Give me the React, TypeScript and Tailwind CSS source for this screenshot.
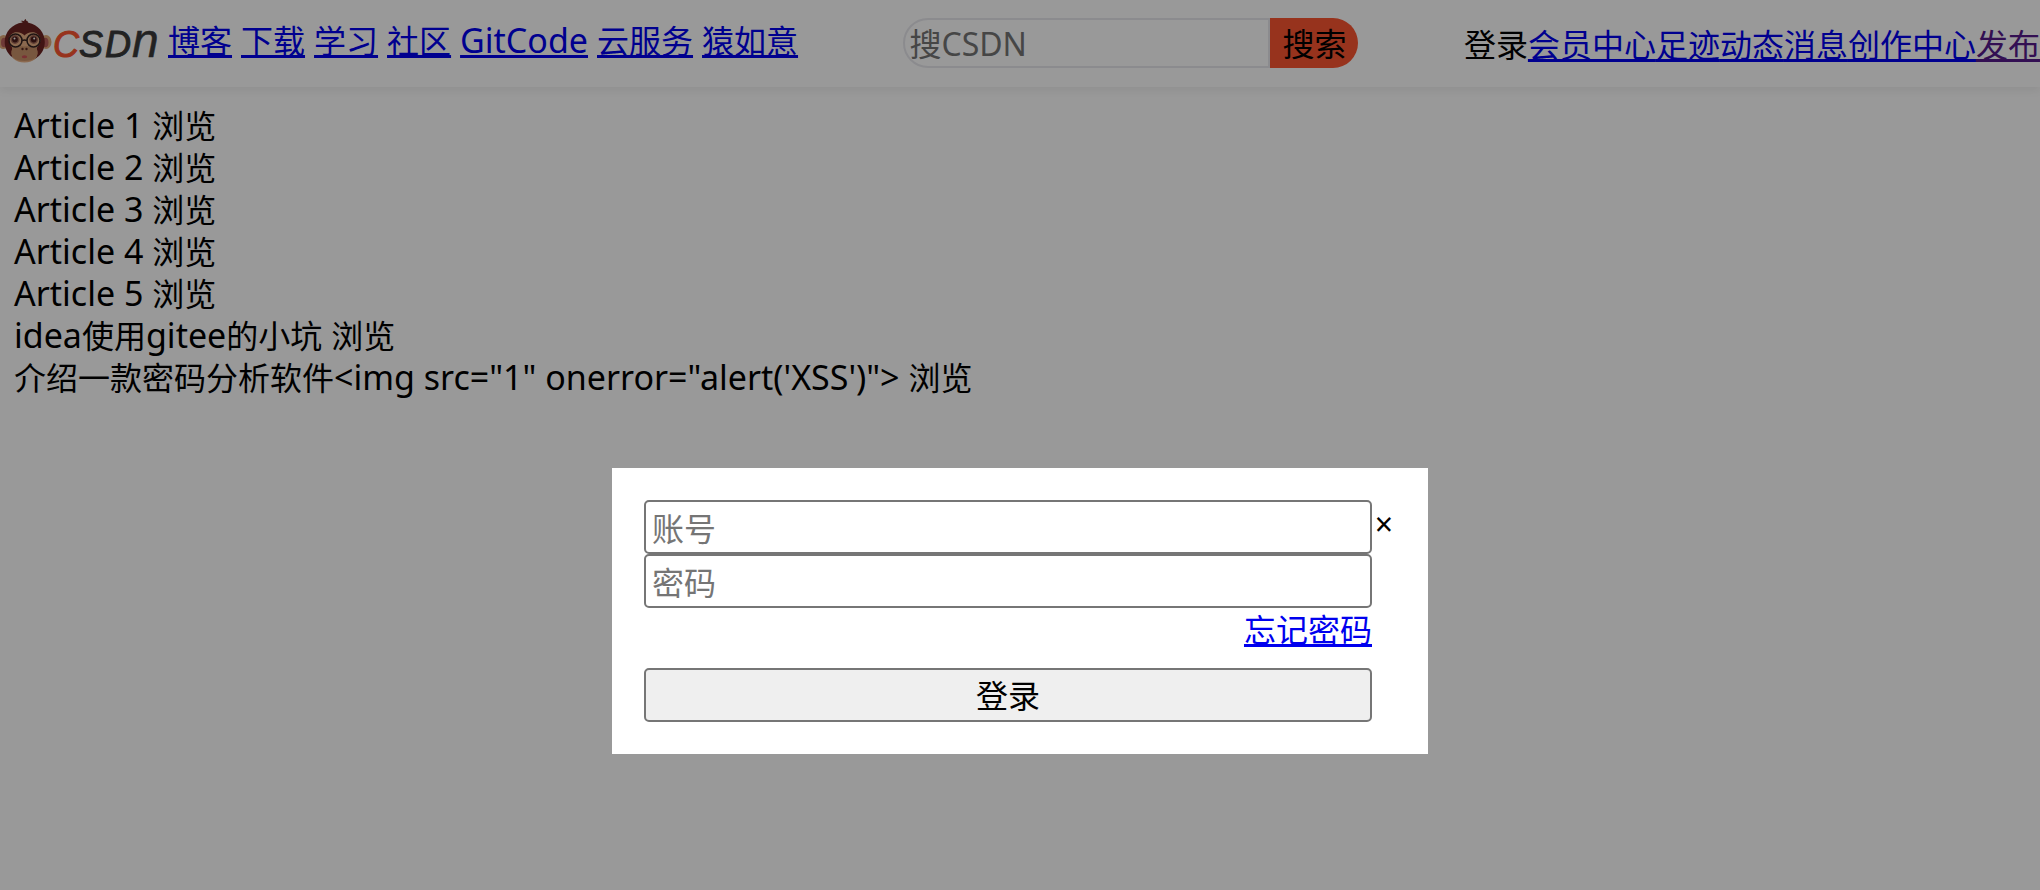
const NAV = ["博客", "下载", "学习", "社区", "GitCode", "云服务", "猿如意"];
const USER_LINKS = ["会员中心", "足迹", "动态", "消息", "创作中心"];
const ARTICLES = [
  "Article 1",
  "Article 2",
  "Article 3",
  "Article 4",
  "Article 5",
  "idea使用gitee的小坑",
  `介绍一款密码分析软件<img src="1" onerror="alert('XSS')">`,
];

/* Latin runs are set slightly larger than the Chinese characters around them. */
function Mixed({ text }: { text: string }) {
  return (
    <>
      {text.split(/([\x20-\x7e]+)/).map((run, i) =>
        i % 2 ? (
          <span key={i} className="text-[34px] leading-none">{run}</span>
        ) : (
          run
        ),
      )}
    </>
  );
}

function Logo() {
  return (
    <svg className="h-[88px] w-[160px] shrink-0" viewBox="0 0 160 88" role="img" aria-label="CSDN">
      <ellipse cx="3.500" cy="42" rx="5.500" ry="7" fill="#e0a878" />
      <ellipse cx="46" cy="42" rx="5.500" ry="7" fill="#e0a878" />
      <ellipse cx="4" cy="42.500" rx="3" ry="4.800" fill="#b8605c" />
      <ellipse cx="45.500" cy="42.500" rx="3" ry="4.800" fill="#b8605c" />
      <path
        d="M22.500 22.500C22.500 21.500 21.500 21.300 20.500 21.300C22 20.500 23.500 20.800 24.300 21.300C24 20.300 24.500 19.500 26 19C25.800 20.500 26.500 21.300 28 20.700C27.300 21.500 27.500 22 28.500 22.700C38 24.500 44.800 32.500 44.800 42C44.800 53 36 61.500 25 61.500C14 61.500 4.700 53 4.700 42C4.700 32 12 24 22.500 22.500Z"
        fill="#6d2422"
      />
      <path
        d="M24.500 35.500C21.500 31.500 11 30 9 38.500C8.400 43 10.500 45.500 12.500 48C9 57 15 62.500 24.500 62.500C34 62.500 40 57 36.500 48C39 45.500 40.800 43 40.200 38.500C38 30 27.500 31.500 24.500 35.500Z"
        fill="#e8b084"
      />
      <path
        d="M12.500 48C17 45.500 21 46.500 24.500 46.500C28 46.500 32 45.500 36.500 48C40 57 34 61 24.500 61C15 61 9 57 12.500 48Z"
        fill="#c99269"
      />
      <circle cx="15" cy="39.500" r="4.400" fill="#a06858" />
      <circle cx="33.700" cy="39.500" r="4.400" fill="#a06858" />
      <circle cx="15" cy="39.500" r="2.900" fill="#4a1c1a" />
      <circle cx="33.700" cy="39.500" r="2.900" fill="#4a1c1a" />
      <circle cx="14.500" cy="38.500" r="1" fill="#fff" />
      <circle cx="34.200" cy="38.500" r="1" fill="#fff" />
      <circle cx="15.500" cy="40.500" r="6.500" fill="none" stroke="#352220" strokeWidth="1.500" />
      <circle cx="33.500" cy="40.500" r="6.500" fill="none" stroke="#352220" strokeWidth="1.500" />
      <path d="M22 40.500Q24.500 39.500 27 40.500" fill="none" stroke="#352220" strokeWidth="1.500" />
      <ellipse cx="22.500" cy="49" rx="1.200" ry="1.300" fill="#5b2a22" />
      <ellipse cx="26.500" cy="49" rx="1.200" ry="1.300" fill="#5b2a22" />
      <ellipse cx="24.500" cy="56.700" rx="2.700" ry="1.500" fill="#cc5258" />
      <g
        fontFamily="'Liberation Sans', sans-serif"
        fontStyle="italic"
        strokeWidth="1"
        strokeLinejoin="round"
      >
        <text x="53" y="57" fontSize="36" fill="#fc5531" stroke="#fc5531">C</text>
        <g fill="#3a3a3a" stroke="#3a3a3a">
          <text x="79" y="57" fontSize="36">S</text>
          <text x="105" y="57" fontSize="36">D</text>
          <text x="132" y="57" fontSize="48" strokeWidth="0.500">n</text>
        </g>
      </g>
    </svg>
  );
}

export default function App() {
  return (
    <div className="relative min-h-screen bg-white font-['Noto_Sans','Noto_Sans_CJK_SC',sans-serif] text-[32px] leading-[42px] text-black [text-decoration-skip-ink:none]">
      <header className="flex h-[87px] items-start justify-between whitespace-nowrap shadow-[0_4px_8px_rgba(0,0,0,0.06)]">
        <div className="flex items-start gap-2">
          <Logo />
          <nav className="flex gap-[9px] pt-5">
            {NAV.map((n) => (
              <a key={n} href="#" className="text-[#0000ee] underline decoration-[3px]">
                <Mixed text={n} />
              </a>
            ))}
          </nav>
        </div>
        <form className="mt-[18px] flex h-[50px]">
          <input
            aria-label="搜索"
            placeholder="搜CSDN"
            className="w-[367px] rounded-l-full border-2 border-[#e8e8ed] bg-white px-1 pt-0.5 placeholder:text-[#757575] placeholder:opacity-100"
          />
          <button type="button" className="rounded-r-full bg-[#fc5531] px-3 pt-0.5">搜索</button>
        </form>
        <div className="flex pt-6">
          <button type="button">登录</button>
          {USER_LINKS.map((n) => (
            <a key={n} href="#" className="text-[#0000ee] underline decoration-[3px]">{n}</a>
          ))}
          <a href="#" className="text-[#551a8b] underline decoration-[3px]">发布</a>
        </div>
      </header>

      <main className="px-[14px] pt-[18px]">
        {ARTICLES.map((a) => (
          <div key={a}>
            <Mixed text={`${a} 浏览`} />
          </div>
        ))}
      </main>

      <div className="absolute inset-0 flex items-start justify-center bg-black/40 pt-[468px]">
        <div role="dialog" aria-label="登录" className="flex w-2/5 items-start bg-white p-8">
          <form className="flex flex-1 flex-col">
            <input
              aria-label="账号"
              placeholder="账号"
              className="h-[54px] rounded-[5px] border-2 border-[#767676] px-[6px] pt-0.5 placeholder:text-[#757575] placeholder:opacity-100"
            />
            <input
              type="password"
              aria-label="密码"
              placeholder="密码"
              className="h-[54px] rounded-[5px] border-2 border-[#767676] px-[6px] pt-0.5 placeholder:text-[#757575] placeholder:opacity-100"
            />
            <a href="#" className="mb-4 self-end leading-[44px] text-[#0000ee] underline decoration-[3px]">忘记密码</a>
            <button type="button" className="h-[54px] rounded-[5px] border-2 border-[#767676] bg-[#efefef] pt-0.5">登录</button>
          </form>
          <button type="button" aria-label="关闭" className="h-12 w-6 text-center">×</button>
        </div>
      </div>
    </div>
  );
}
